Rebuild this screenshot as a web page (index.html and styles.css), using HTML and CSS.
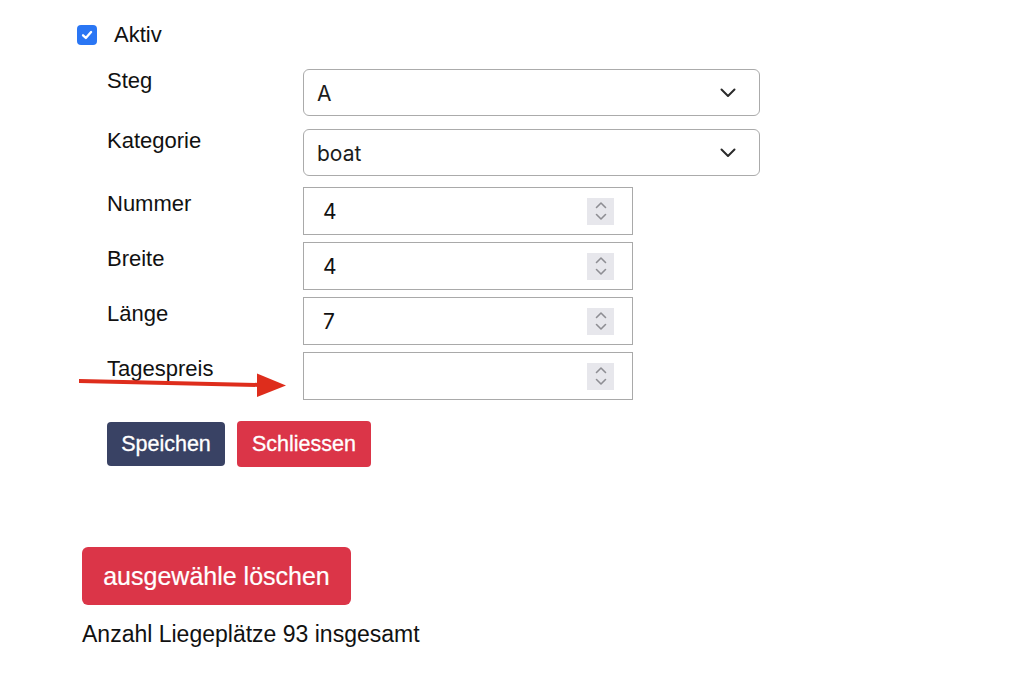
FILE: index.html
```html
<!DOCTYPE html>
<html lang="de">
<head>
<meta charset="utf-8">
<title>Liegeplatz</title>
<link rel="stylesheet" href="styles.css">
</head>
<body>
<div class="page">
  <div class="check-row">
    <span class="checkbox">
      <svg width="14" height="14" viewBox="0 0 12 12"><path d="M2.6 6.3 L5 8.5 L9.5 3.5" fill="none" stroke="#fff" stroke-width="2" stroke-linecap="round" stroke-linejoin="round"/></svg>
    </span>
    <span class="check-label">Aktiv</span>
  </div>

  <div class="form">
    <div class="row row-select">
      <label class="lbl">Steg</label>
      <div class="select"><span class="val">A</span>
        <svg class="chev" width="16" height="10" viewBox="0 0 16 10"><path d="M1.5 1.5 L8 8 L14.5 1.5" fill="none" stroke="#2b2b2b" stroke-width="2" stroke-linecap="round" stroke-linejoin="round"/></svg>
      </div>
    </div>
    <div class="row row-select">
      <label class="lbl">Kategorie</label>
      <div class="select"><span class="val">boat</span>
        <svg class="chev" width="16" height="10" viewBox="0 0 16 10"><path d="M1.5 1.5 L8 8 L14.5 1.5" fill="none" stroke="#2b2b2b" stroke-width="2" stroke-linecap="round" stroke-linejoin="round"/></svg>
      </div>
    </div>
    <div class="row row-num">
      <label class="lbl">Nummer</label>
      <div class="num"><span class="val">4</span>
        <span class="spin"><svg width="14" height="22" viewBox="0 0 14 22"><path d="M2.5 7.5 L7 3 L11.5 7.5 M2.5 14.5 L7 19 L11.5 14.5" fill="none" stroke="#8e8e93" stroke-width="1.6" stroke-linecap="round" stroke-linejoin="round"/></svg></span>
      </div>
    </div>
    <div class="row row-num">
      <label class="lbl">Breite</label>
      <div class="num"><span class="val">4</span>
        <span class="spin"><svg width="14" height="22" viewBox="0 0 14 22"><path d="M2.5 7.5 L7 3 L11.5 7.5 M2.5 14.5 L7 19 L11.5 14.5" fill="none" stroke="#8e8e93" stroke-width="1.6" stroke-linecap="round" stroke-linejoin="round"/></svg></span>
      </div>
    </div>
    <div class="row row-num">
      <label class="lbl">Länge</label>
      <div class="num"><span class="val">7</span>
        <span class="spin"><svg width="14" height="22" viewBox="0 0 14 22"><path d="M2.5 7.5 L7 3 L11.5 7.5 M2.5 14.5 L7 19 L11.5 14.5" fill="none" stroke="#8e8e93" stroke-width="1.6" stroke-linecap="round" stroke-linejoin="round"/></svg></span>
      </div>
    </div>
    <div class="row row-num row-last">
      <label class="lbl">Tagespreis</label>
      <div class="num"><span class="val"></span>
        <span class="spin"><svg width="14" height="22" viewBox="0 0 14 22"><path d="M2.5 7.5 L7 3 L11.5 7.5 M2.5 14.5 L7 19 L11.5 14.5" fill="none" stroke="#8e8e93" stroke-width="1.6" stroke-linecap="round" stroke-linejoin="round"/></svg></span>
      </div>
      <svg class="arrow" width="212" height="26" viewBox="0 0 212 26"><path d="M0 9 Q90 11 182 13" fill="none" stroke="#de2d1c" stroke-width="4" stroke-linecap="round"/><path d="M178 1.5 L207 13.5 L178 25 Z" fill="#de2d1c"/></svg>
    </div>

    <div class="actions">
      <button class="btn btn-dark">Speichen</button>
      <button class="btn btn-red btn-tall">Schliessen</button>
    </div>
  </div>

  <button class="btn-big">ausgewähle löschen</button>
  <p class="total">Anzahl Liegeplätze 93 insgesamt</p>
</div>
</body>
</html>
```

FILE: styles.css
```css
* { box-sizing: border-box; }
html, body { margin: 0; padding: 0; background: #fff; }
body {
  font-family: "Liberation Sans", Arial, sans-serif;
  color: #111;
}
.page {
  padding: 25px 0 0 77px;
}
.check-row {
  display: flex;
  align-items: center;
  height: 20px;
}
.checkbox {
  width: 20px;
  height: 20px;
  border-radius: 4px;
  background: #2a76f4;
  display: flex;
  align-items: center;
  justify-content: center;
}
.check-label {
  margin-left: 17px;
  font-size: 22px;
  line-height: 26px;
}
.form {
  margin-left: 30px;
  margin-top: 24px;
}
.row {
  display: grid;
  grid-template-columns: 196px auto;
  align-items: start;
  position: relative;
}
.lbl {
  font-size: 22px;
  line-height: 26px;
  color: #111;
}
.row-select { margin-bottom: 13px; }
.row-select + .row-num { margin-top: -2px; }
.row-select .lbl { margin-top: -1px; }
.row-num { margin-bottom: 7px; }
.row-num .lbl { margin-top: 4px; }
.row-last { margin-bottom: 0; }

.select {
  width: 457px;
  height: 47px;
  border: 1px solid #ababab;
  border-radius: 6px;
  display: flex;
  align-items: center;
  justify-content: space-between;
  padding: 0 23px 0 13px;
  font-family: Inter, "Noto Sans", sans-serif;
  font-size: 21px;
  color: #1c1c1c;
}
.select .val { margin-top: 1px; }
.num {
  width: 330px;
  height: 48px;
  border: 1px solid #a9a9a9;
  display: flex;
  align-items: center;
  justify-content: space-between;
  padding: 0 18px 0 19px;
  font-family: Inter, "Noto Sans", sans-serif;
  font-size: 21px;
  color: #111;
}
.spin {
  width: 27px;
  height: 27px;
  background: #e7e7ec;
  display: flex;
  align-items: center;
  justify-content: center;
}
.arrow {
  position: absolute;
  left: -28px;
  top: 20px;
}
.actions {
  display: flex;
  align-items: center;
  gap: 12px;
  margin-top: 21px;
}
.btn {
  border: none;
  color: #fff;
  font-family: "Liberation Sans", Arial, sans-serif;
  font-size: 21.5px;
  height: 44px;
  padding: 0 14px;
  border-radius: 4px;
  -webkit-text-stroke: 0.3px #fff;
}
.btn-dark { background: #394264; width: 118px; }
.btn-red { background: #db3548; width: 134px; }
.btn-tall { height: 46px; }

.btn-big {
  display: block;
  margin: 80px 0 0 5px;
  width: 269px;
  height: 58px;
  border: none;
  border-radius: 6px;
  background: #db3548;
  color: #fff;
  font-family: "Liberation Sans", Arial, sans-serif;
  font-size: 25px;
  -webkit-text-stroke: 0.2px #fff;
}
.total {
  margin: 15px 0 0 5px;
  font-size: 23px;
  line-height: 28px;
  color: #111;
}
```
